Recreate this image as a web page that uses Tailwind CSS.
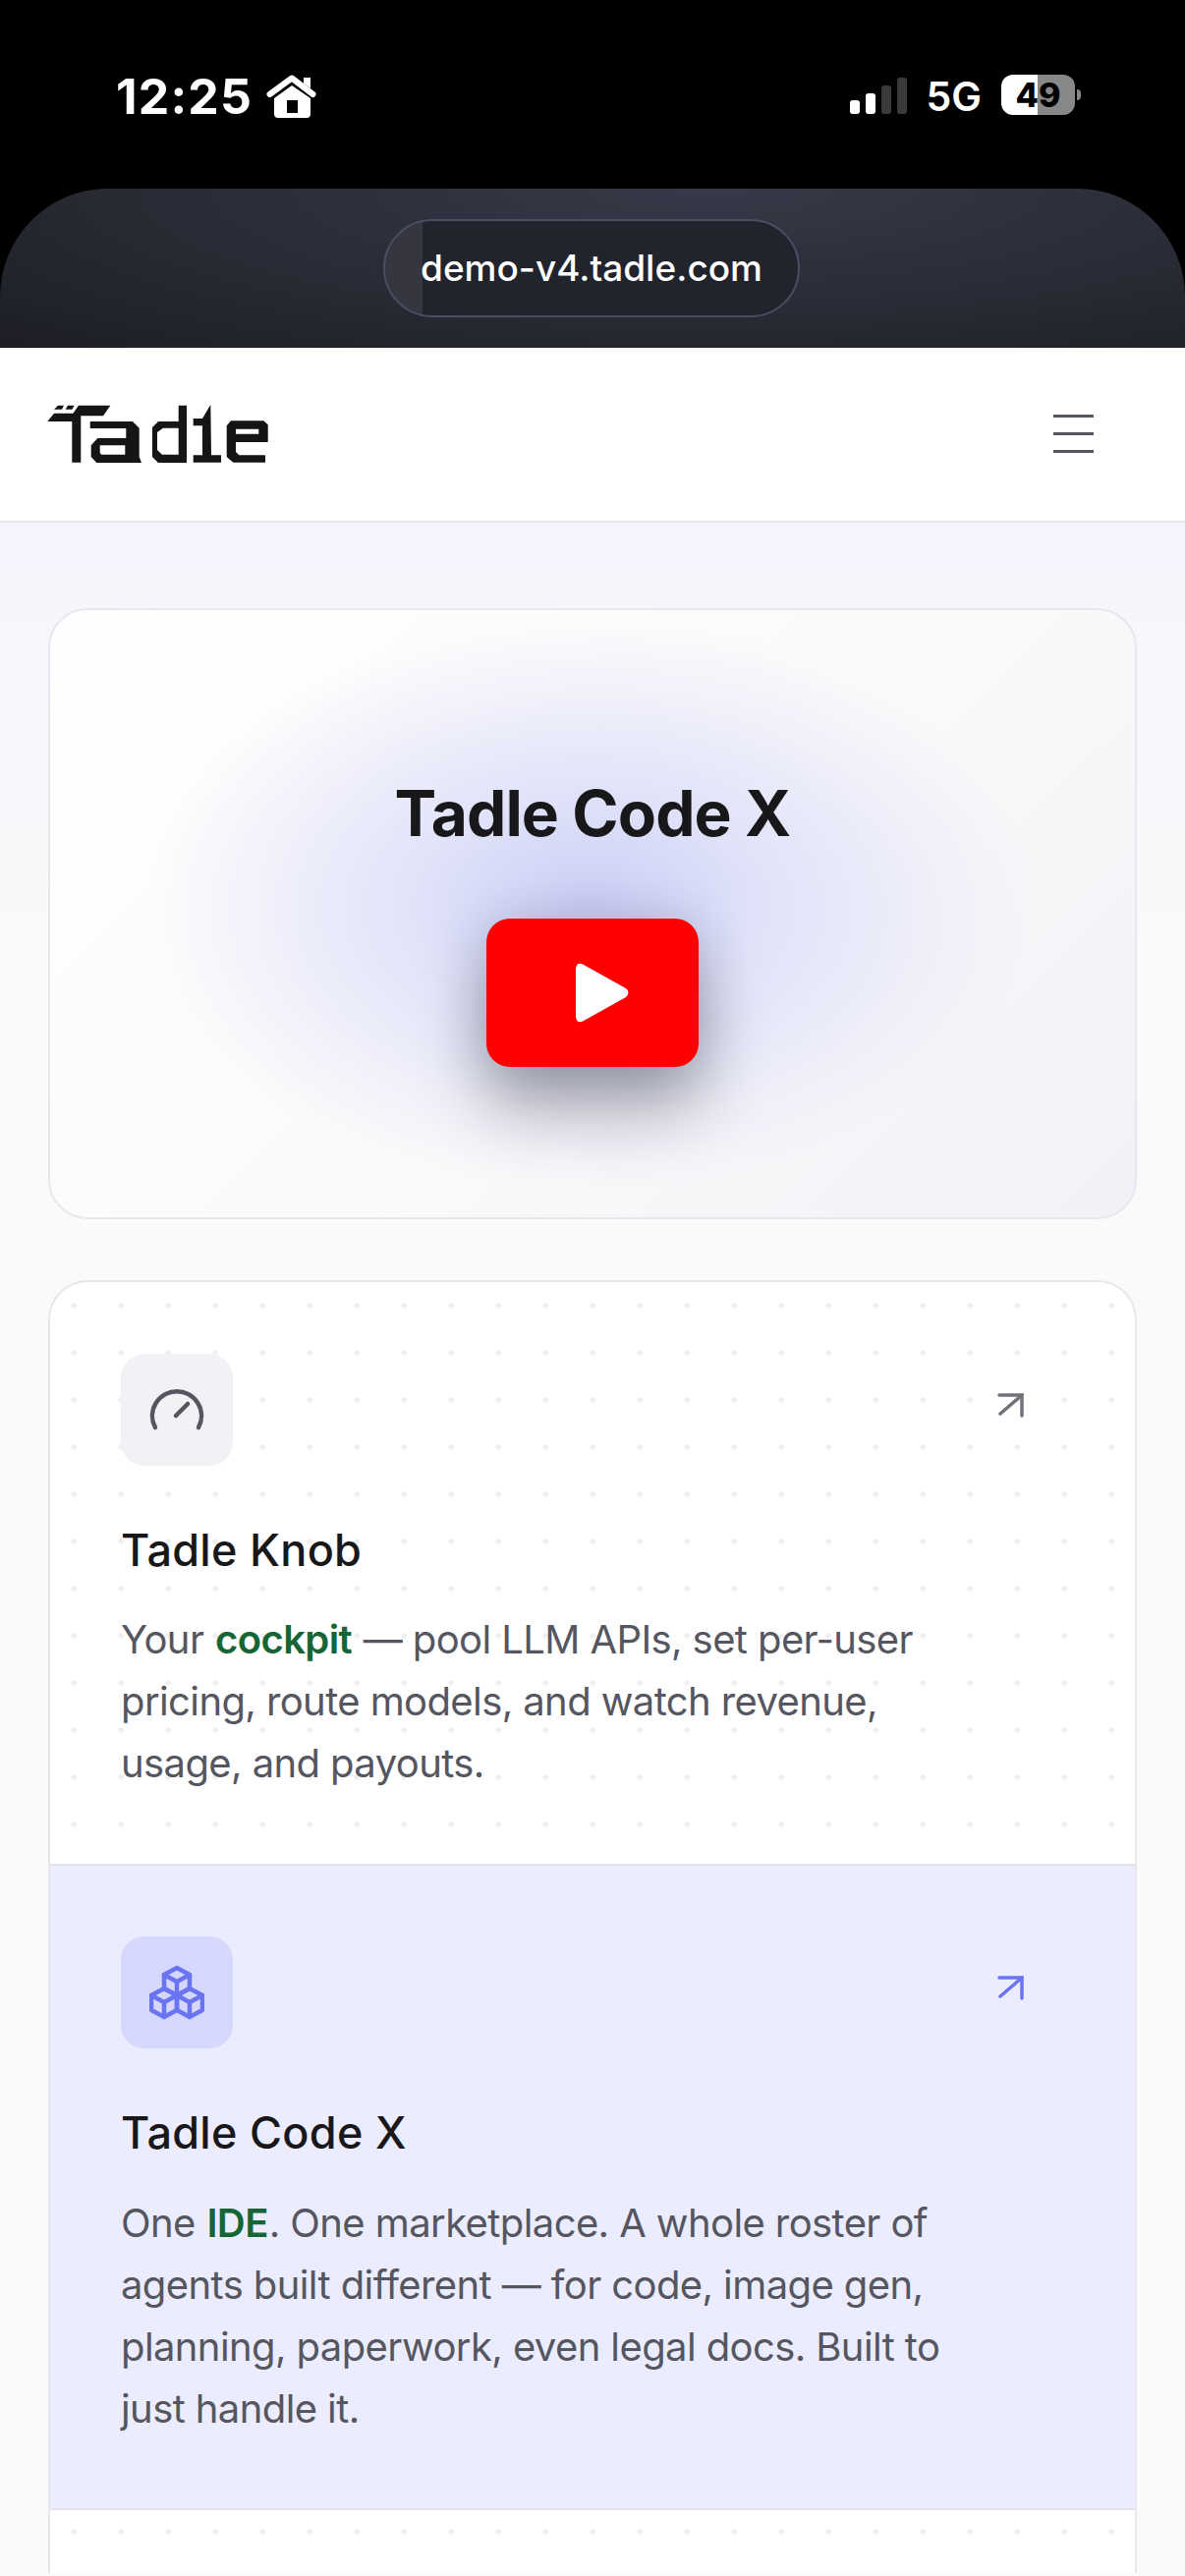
<!DOCTYPE html>
<html lang="en">
<head>
  <meta charset="UTF-8">
  <meta name="viewport" content="width=device-width, initial-scale=1.0">
  <title>Tadle</title>
  <script src="https://cdn.jsdelivr.net/npm/@tailwindcss/browser@4"></script>
</head>
<body class="w-[1206px] h-[2622px] overflow-hidden bg-[#fafafa] font-['Inter',sans-serif]">

  <!-- status bar -->
  <div class="h-[192px] bg-black text-white">
    <div class="flex items-start justify-between pl-[118px] pr-[106px] pt-[76px]">
      <div class="flex items-center gap-[14px]">
        <span class="text-[50px] leading-[44px] font-bold tracking-[1.2px]">12:25</span>
        <svg class="w-[51px] h-[44px]" viewBox="0 0 51 44" fill="white">
          <path d="M3.500 20 L26 3.500 L47.500 20" fill="none" stroke="white" stroke-width="6" stroke-linecap="round" stroke-linejoin="round"/>
          <path d="M38 3 H45 V14 L38 9 Z"/>
          <path fill-rule="evenodd" d="M26 11 L45 24 V40 Q45 44 41 44 H12 Q8 44 8 40 V24 Z M21 26 V39 H32 V26 Z"/>
        </svg>
      </div>
      <div class="flex items-start">
        <div class="flex items-end gap-[6px] h-[37px] mt-[3px]">
          <div class="w-[10px] h-[14px] rounded-[3px] bg-white"></div>
          <div class="w-[10px] h-[21px] rounded-[3px] bg-white"></div>
          <div class="w-[10px] h-[29px] rounded-[3px] bg-[#3a3a3a]"></div>
          <div class="w-[10px] h-[37px] rounded-[3px] bg-[#3a3a3a]"></div>
        </div>
        <span class="ml-[20px] text-[41px] leading-[44px] font-semibold">5G</span>
        <div class="ml-[20px] flex items-center">
          <div class="w-[75px] h-[41px] rounded-[12px] overflow-hidden bg-[linear-gradient(90deg,#ffffff_49%,#888888_49%)] flex items-center justify-center text-black text-[34px] leading-none font-extrabold">49</div>
          <div class="w-[4px] h-[11px] ml-[2px] rounded-r-full bg-[#888888]"></div>
        </div>
      </div>
    </div>
  </div>

  <!-- browser url panel -->
  <div class="h-[162px] bg-black">
    <div class="h-full rounded-t-[110px] bg-[radial-gradient(ellipse_at_60%_0%,#363a48_0%,#2a2c37_50%,#1d1e24_100%)] flex justify-center pt-[31px]">
      <div class="w-[424px] h-[100px] -ml-[2px] rounded-[50px] border-2 border-[#4a4e63] bg-[linear-gradient(90deg,#353640_9%,#21232d_9%)] flex items-center justify-center text-white text-[37px] font-medium">demo-v4.tadle.com</div>
    </div>
  </div>

  <!-- nav -->
  <header class="h-[178px] bg-white border-b-2 border-[#e6e6ec] flex items-center justify-between pl-[48px] pr-[93px]">
    <svg class="w-[226px] h-[60px]" viewBox="0 0 226 60" fill="#151515">
      <path d="M7 4.700 L11 0.700 H17 L15 4.700 Z"/>
      <path d="M18.700 4.700 L21 0.700 H27.700 L25.300 4.700 Z"/>
      <path d="M0.300 17 L7 8.700 H26.300 L32 0.700 H64.300 L57 11.300 H34.300 V58.700 H25.300 V17 Z"/>
      <path fill-rule="evenodd" d="M43.700 17 H87 L93.700 23.700 V53 L96 59 H50.300 L44.700 53 V41.300 L51.300 34 H80.300 V24 H43.700 Z M53.700 41.300 H79.300 V50.700 H55.300 L53.700 49 Z"/>
      <path fill-rule="evenodd" d="M113 17 H133.700 V0.700 H142 V59 H113 L107 53 V23 Z M118 23.700 H133.700 V50.700 H117 L112 46 V28 Z"/>
      <path d="M148.700 14 H158 L166.300 0 L167 51.300 H177 V58.700 H148.700 V51.300 H158 V21.300 H148.700 Z"/>
      <path fill-rule="evenodd" d="M182.700 21.300 L187 16.300 H220.300 L224.700 20.300 V38 H192 V48 L195.300 51.300 H222 V58.700 H189.300 L182.700 53 Z M192 24.700 H215.300 V29.700 H192 Z"/>
    </svg>
    <div class="w-[41px] -mt-[2px] flex flex-col gap-[15px]">
      <div class="h-[3px] bg-[#55565f]"></div>
      <div class="h-[3px] bg-[#55565f]"></div>
      <div class="h-[3px] bg-[#55565f]"></div>
    </div>
  </header>

  <!-- content -->
  <main class="px-[49px] pt-[87px] bg-[linear-gradient(180deg,#f5f5fd_0%,#fafafa_500px)]">
    <section class="relative h-[622px] rounded-[40px] border-2 border-[#e7e7ee] overflow-hidden bg-[linear-gradient(135deg,#ffffff_0%,#fafafa_55%,#f1f1f7_100%)] flex flex-col items-center">
      <div class="absolute left-[100px] top-[10px] w-[900px] h-[580px] rounded-full bg-[radial-gradient(closest-side,#cbcff5_0%,#e0e2f9_38%,#f2f3fc00_100%)]"></div>
      <h2 class="relative mt-[171px] text-[64px] leading-[72px] font-bold text-[#18181b] tracking-[-0.9px]">Tadle Code X</h2>
      <div class="relative mt-[71px] w-[216px] h-[151px] rounded-[24px] bg-[#ff0000] shadow-[0_40px_70px_rgba(0,0,0,0.32),0_0_50px_rgba(60,60,110,0.16)] flex items-center justify-center">
        <svg class="w-[54px] h-[61px] ml-[20px]" viewBox="0 0 54 61" fill="white"><path d="M0 6 Q1 -2 8 2 L51 26 Q56 30 51 35 L8 59 Q1 63 0 55 Z"/></svg>
      </div>
    </section>

    <section class="mt-[62px] rounded-t-[40px] border-x-2 border-t-2 border-[#e7e7ee] overflow-hidden bg-white bg-[radial-gradient(circle,#f0f0f2_2.500px,transparent_3px)] bg-[size:48px_48px]">
      <div class="h-[594px] px-[72px] pt-[73px] border-b-2 border-[#e4e4ea]">
        <div class="flex items-start justify-between">
          <div class="w-[114px] h-[114px] rounded-[24px] bg-[#f2f2f6] flex items-center justify-center">
            <svg class="w-[56px] h-[56px]" viewBox="0 0 56 56" fill="none" stroke="#55565f" stroke-width="4.500" stroke-linecap="round">
              <path d="M6 46 A25 25 0 1 1 50 46"/>
              <path d="M27 34 L39 22"/>
            </svg>
          </div>
          <svg class="w-[28px] h-[28px] mt-[39px] mr-[40px]" viewBox="0 0 28 28" fill="none" stroke="#71717a" stroke-width="3.500" stroke-linecap="round"><path d="M2 3 H25 V24"/><path d="M25 3 L3 22"/></svg>
        </div>
        <h3 class="mt-[58px] text-[45px] leading-[56px] font-medium tracking-[0.3px] text-[#18181b]">Tadle Knob</h3>
        <p class="mt-[31px] max-w-[850px] text-[40px] leading-[63px] tracking-[-0.6px] text-[#55565f]">Your <span class="mx-[1px] font-semibold text-[#166534]">cockpit</span> — pool LLM APIs, set per-user pricing, route models, and watch revenue, usage, and payouts.</p>
      </div>
      <div class="h-[656px] px-[72px] pt-[72px] bg-[#ebedfe] border-b-2 border-[#e4e4ea]">
        <div class="flex items-start justify-between">
          <div class="w-[114px] h-[114px] rounded-[24px] bg-[#d5d8fc] flex items-center justify-center">
            <svg class="w-[56px] h-[56px]" viewBox="0 0 56 56" fill="none" stroke="#6b74f0" stroke-width="4.500" stroke-linejoin="round" stroke-linecap="round">
              <path d="M28 3 L41 10 V24 L28 31 L15 24 V10 Z"/>
              <path d="M15 10 L28 17 L41 10 M28 17 V31"/>
              <path d="M15 24 L28 31 V46 L15 53 L2 46 V31 Z"/>
              <path d="M2 31 L15 38 L28 31 M15 38 V53"/>
              <path d="M41 24 L54 31 V46 L41 53 L28 46 V31 Z"/>
              <path d="M28 31 L41 38 L54 31 M41 38 V53"/>
            </svg>
          </div>
          <svg class="w-[28px] h-[28px] mt-[39px] mr-[40px]" viewBox="0 0 28 28" fill="none" stroke="#6b74f0" stroke-width="3.500" stroke-linecap="round"><path d="M2 3 H25 V24"/><path d="M25 3 L3 22"/></svg>
        </div>
        <h3 class="mt-[58px] text-[45px] leading-[56px] font-medium tracking-[0.3px] text-[#18181b]">Tadle Code X</h3>
        <p class="mt-[32px] max-w-[850px] text-[40px] leading-[63px] tracking-[-0.6px] text-[#55565f]">One <span class="mx-[1px] font-semibold text-[#166534]">IDE</span>. One marketplace. A whole roster of agents built different — for code, image gen, planning, paperwork, even legal docs. Built to just handle it.</p>
      </div>
      <div class="h-[64px]"></div>
    </section>
  </main>
</body>
</html>
